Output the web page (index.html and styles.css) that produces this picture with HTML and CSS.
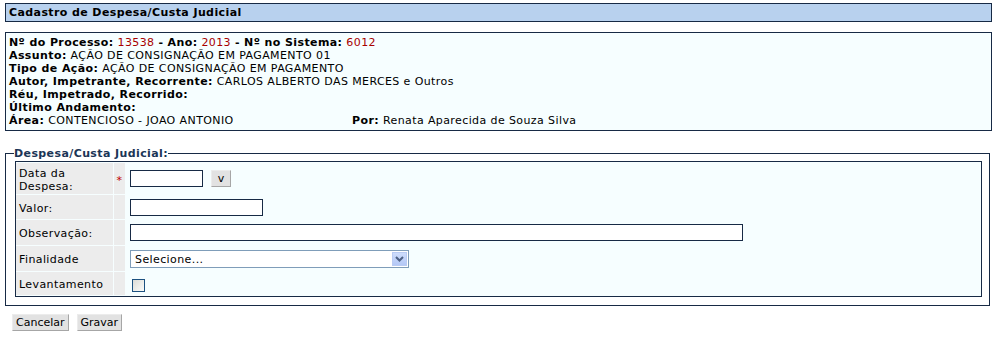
FILE: index.html
```html
<html>
	<head>
		<title>Cadastro de Despesa/Custa Judicial</title>
		<link rel="stylesheet" href="styles.css">
	</head>
	<body>
		<div class="pagetitle">Cadastro de Despesa/Custa Judicial</div>

		<div class="processo">
			<div><b>Nº do Processo:</b> <span class="num">13538</span> <b>- Ano:</b> <span class="num">2013</span> <b>- Nº no Sistema:</b> <span class="num">6012</span></div>
			<div><b>Assunto:</b> AÇÃO DE CONSIGNAÇÃO EM PAGAMENTO 01</div>
			<div><b>Tipo de Ação:</b> AÇÃO DE CONSIGNAÇÃO EM PAGAMENTO</div>
			<div><b>Autor, Impetrante, Recorrente:</b> CARLOS ALBERTO DAS MERCES e Outros</div>
			<div><b>Réu, Impetrado, Recorrido:</b></div>
			<div><b>Último Andamento:</b></div>
			<div class="arearow">
				<div class="area"><b>Área:</b> CONTENCIOSO - JOAO ANTONIO</div>
				<div><b>Por:</b> Renata Aparecida de Souza Silva</div>
			</div>
		</div>

		<fieldset class="despesa">
			<legend>Despesa/Custa Judicial:</legend>
			<div class="formgrid">
				<div class="label">Data da Despesa:</div>
				<div class="req">*</div>
				<div class="field">
					<input type="text" class="txt data">
					<button class="btn cal">v</button>
				</div>

				<div class="label">Valor:</div>
				<div class="req"></div>
				<div class="field"><input type="text" class="txt valor"></div>

				<div class="label">Observação:</div>
				<div class="req"></div>
				<div class="field"><input type="text" class="txt obs"></div>

				<div class="label">Finalidade</div>
				<div class="req"></div>
				<div class="field">
					<div class="select">
						<span class="seltext">Selecione...</span>
						<span class="selbtn">
							<svg width="9" height="6" viewBox="0 0 9 6"><path d="M1 1 L4.5 4.5 L8 1" fill="none" stroke="#4d6185" stroke-width="2"/></svg>
						</span>
					</div>
				</div>

				<div class="label">Levantamento</div>
				<div class="req"></div>
				<div class="field"><span class="check"></span></div>
			</div>
		</fieldset>

		<div class="actions">
			<button class="btn">Cancelar</button>
			<button class="btn">Gravar</button>
		</div>
	</body>
</html>
```

FILE: styles.css
```css
body{
	margin: 3px 7px 0 5px;
	font-family: "DejaVu Sans", Verdana, sans-serif;
	font-size: 11px;
	letter-spacing: 0.4px;
	color: black;
	background: white;
}

div.pagetitle{
	height: 17px;
	line-height: 17px;
	border: 1px solid #172a45;
	background-color: #b8d1ee;
	font-weight: bold;
	padding-left: 3px;
}

div.processo{
	margin-top: 10px;
	border: 1px solid #172a45;
	background-color: #f6feff;
	padding: 3px 3px 3px 3px;
	line-height: 13px;
}
span.num{
	color: #a80000;
}
div.arearow{
	display: flex;
}
div.area{
	width: 343px;
}

fieldset.despesa{
	margin: 16px 2px 0 0;
	padding: 1px 7px 8px 9px;
	border: 1px solid #172a45;
}
fieldset.despesa legend{
	padding: 0;
	margin-left: -1px;
	font-weight: bold;
	color: #1b3556;
	line-height: 13px;
}

div.formgrid{
	display: grid;
	grid-template-columns: 97px 11px 1fr;
	grid-template-rows: 31px 24px 25px 25px 23px;
	gap: 1px;
	padding: 1px 1px 1px 0;
	border: 1px solid #172a45;
	background-color: #f6feff;
}
div.label, div.req{
	background-color: #ececec;
	display: flex;
	align-items: center;
}
div.label{
	padding: 2px 0 0 3px;
	line-height: 13px;
}
div.req{
	justify-content: center;
	color: #c00000;
	padding-top: 3px;
}
div.field{
	display: flex;
	align-items: center;
	padding-left: 4px;
}

input.txt{
	box-sizing: border-box;
	height: 17px;
	border: 1px solid #172a45;
	background: white;
	font-family: inherit;
	font-size: 11px;
	padding: 0 2px;
	margin: 0;
}
input.data{ width: 73px; }
input.valor{ width: 133px; }
input.obs{ width: 613px; }

.btn{
	box-sizing: border-box;
	height: 17px;
	padding: 0 3px;
	margin: 0;
	font-family: inherit;
	font-size: 11px;
	letter-spacing: 0;
	color: black;
	background-color: #e2e2e2;
	border: 1px solid;
	border-color: #ececec #a6a6a6 #a6a6a6 #ececec;
	line-height: 14px;
}
.btn.cal{
	margin-left: 8px;
	width: 20px;
	padding: 0;
}

div.select{
	box-sizing: border-box;
	width: 279px;
	height: 18px;
	border: 1px solid #7f9db9;
	background: white;
	display: flex;
	align-items: center;
	margin-top: 1px;
}
span.seltext{
	flex: 1;
	padding-left: 4px;
}
span.selbtn{
	width: 15px;
	height: 14px;
	margin-right: 1px;
	background: linear-gradient(#cddcfb, #b4c8f6);
	border: 1px solid #b9cbf3;
	box-sizing: border-box;
	display: flex;
	align-items: center;
	justify-content: center;
}

span.check{
	box-sizing: border-box;
	width: 13px;
	height: 13px;
	margin-left: 2px;
	margin-top: 4px;
	border: 1px solid #1c5180;
	background: linear-gradient(135deg, #dcdcd7, #fbfbf9);
}

div.actions{
	display: flex;
	gap: 8px;
	margin: 8px 0 0 7px;
}
```
